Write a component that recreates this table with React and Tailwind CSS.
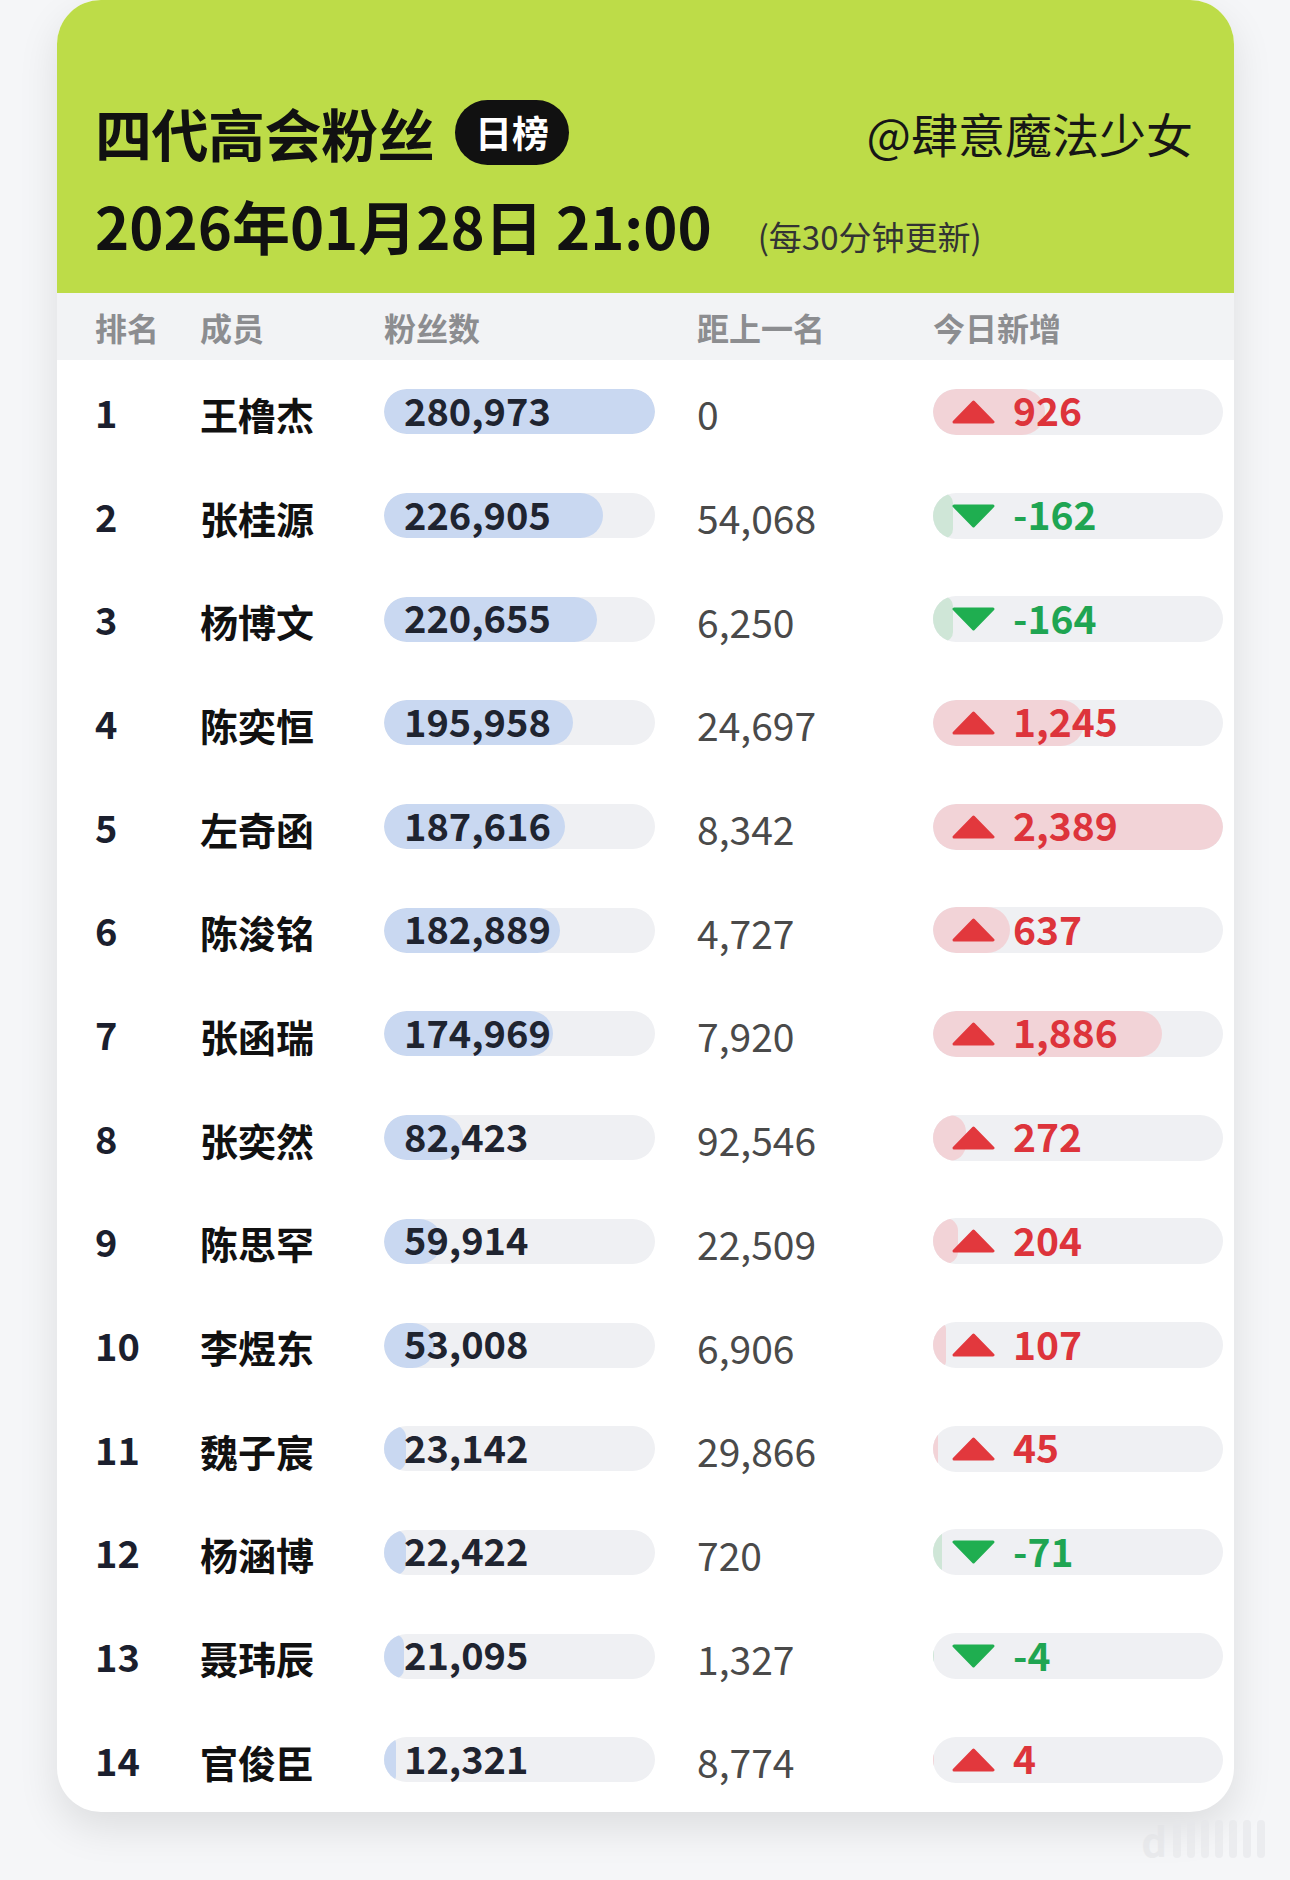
import React from "react";

const rows = [
  { rank: 1, name: "王橹杰", fans: 280973, gap: "0", today: 926 },
  { rank: 2, name: "张桂源", fans: 226905, gap: "54,068", today: -162 },
  { rank: 3, name: "杨博文", fans: 220655, gap: "6,250", today: -164 },
  { rank: 4, name: "陈奕恒", fans: 195958, gap: "24,697", today: 1245 },
  { rank: 5, name: "左奇函", fans: 187616, gap: "8,342", today: 2389 },
  { rank: 6, name: "陈浚铭", fans: 182889, gap: "4,727", today: 637 },
  { rank: 7, name: "张函瑞", fans: 174969, gap: "7,920", today: 1886 },
  { rank: 8, name: "张奕然", fans: 82423, gap: "92,546", today: 272 },
  { rank: 9, name: "陈思罕", fans: 59914, gap: "22,509", today: 204 },
  { rank: 10, name: "李煜东", fans: 53008, gap: "6,906", today: 107 },
  { rank: 11, name: "魏子宸", fans: 23142, gap: "29,866", today: 45 },
  { rank: 12, name: "杨涵博", fans: 22422, gap: "720", today: -71 },
  { rank: 13, name: "聂玮辰", fans: 21095, gap: "1,327", today: -4 },
  { rank: 14, name: "官俊臣", fans: 12321, gap: "8,774", today: 4 },
];

const maxFans = 280973;
const maxToday = 2389;
const fmt = (n) => n.toLocaleString("en-US");

const Triangle = ({ up }) => (
  <svg width="43" height="24" viewBox="0 0 43 24" className="shrink-0">
    {up ? (
      <path d="M21.5 2 L41 22 L2 22 Z" fill="#e2383d" stroke="#e2383d" strokeWidth="3" strokeLinejoin="round" />
    ) : (
      <path d="M2 2 L41 2 L21.5 22 Z" fill="#1fae50" stroke="#1fae50" strokeWidth="3" strokeLinejoin="round" />
    )}
  </svg>
);

// pill track with a proportional fill; content sits on top, outside the clipped layer
const Bar = ({ width, height, ratio, fill, children }) => (
  <div className={`relative shrink-0 ${width} ${height}`}>
    <div className="absolute inset-0 rounded-full bg-[#eff0f3] overflow-hidden">
      <div className={`h-full rounded-full ${fill}`} style={{ width: `${ratio * 100}%` }}></div>
    </div>
    <div className="relative h-full flex items-center">{children}</div>
  </div>
);

const Row = ({ r }) => {
  const up = r.today >= 0;
  return (
    <div className="flex items-center h-[103.7px] pl-[38px]">
      <div className="w-[105px] shrink-0 text-[38px] font-bold text-[#1b1f2e] leading-none">{r.rank}</div>
      <div className="w-[184px] shrink-0 text-[38px] font-bold text-[#111] leading-none pt-1">{r.name}</div>
      <Bar width="w-[271px]" height="h-[45px]" ratio={r.fans / maxFans} fill="bg-[#c9d8f1]">
        <span className="pl-5 pb-1 text-[38px] font-bold text-[#1f2430] leading-none">{fmt(r.fans)}</span>
      </Bar>
      <div className="w-[278px] shrink-0 pl-[42px] text-[39px] text-[#4a4a4a] leading-none pt-1">{r.gap}</div>
      <Bar
        width="w-[290px]"
        height="h-[46px]"
        ratio={Math.abs(r.today) / maxToday}
        fill={up ? "bg-[#f2d3d7]" : "bg-[#cfe6d7]"}
      >
        <div className="flex items-center pl-[19px] gap-[18px]">
          <Triangle up={up} />
          <span className={`pb-1 text-[39px] font-bold leading-none ${up ? "text-[#dd343b]" : "text-[#1fa552]"}`}>
            {up ? fmt(r.today) : `-${fmt(Math.abs(r.today))}`}
          </span>
        </div>
      </Bar>
    </div>
  );
};

export default function App() {
  return (
    <div className="w-[1290px] h-[1880px] bg-[#f5f6f8] font-['Noto_Sans_CJK_SC',sans-serif] pl-[57px]">
      <div className="w-[1177px] bg-white rounded-[44px] overflow-hidden shadow-[0_16px_40px_rgba(0,0,0,0.10)]">
        <div className="h-[293px] bg-[#bddc48] pt-[100px] pl-[38px] pr-[41px]">
          <div className="flex items-center h-[65px]">
            <h1 className="text-[57px] font-bold text-[#111] leading-none tracking-[-0.5px]">四代高会粉丝</h1>
            <span className="ml-[21px] w-[114px] h-[65px] rounded-full bg-[#111] text-white text-[37px] font-bold flex items-center justify-center leading-none">
              日榜
            </span>
            <span className="ml-auto text-[47px] text-[#161616] leading-none">@肆意魔法少女</span>
          </div>
          <div className="flex items-baseline mt-[31px]">
            <span className="text-[58px] font-bold text-[#111] leading-none">2026年01月28日 21:00</span>
            <span className="ml-[46px] text-[33px] text-[#333] leading-none">(每30分钟更新)</span>
          </div>
        </div>
        <div className="flex items-center h-[67px] bg-[#f2f3f5] pl-[38px] text-[32px] font-bold text-[#8c8d90] leading-none">
          <div className="w-[105px]">排名</div>
          <div className="w-[184px]">成员</div>
          <div className="w-[313px]">粉丝数</div>
          <div className="w-[236px]">距上一名</div>
          <div>今日新增</div>
        </div>
        <div>
          {rows.map((r) => (
            <Row key={r.rank} r={r} />
          ))}
        </div>
      </div>
      <div className="flex justify-end pr-[25px] mt-[8px] gap-[6px] opacity-60">
        <span className="text-[40px] text-[#e2e3e6] font-bold leading-none">d</span>
        <span className="w-[8px] h-[38px] bg-[#e6e7ea] rounded-sm"></span>
        <span className="w-[8px] h-[38px] bg-[#e6e7ea] rounded-sm"></span>
        <span className="w-[8px] h-[38px] bg-[#e6e7ea] rounded-sm"></span>
        <span className="w-[8px] h-[38px] bg-[#e6e7ea] rounded-sm"></span>
        <span className="w-[8px] h-[38px] bg-[#e6e7ea] rounded-sm"></span>
        <span className="w-[8px] h-[38px] bg-[#e6e7ea] rounded-sm"></span>
        <span className="w-[8px] h-[38px] bg-[#e6e7ea] rounded-sm"></span>
      </div>
    </div>
  );
}
